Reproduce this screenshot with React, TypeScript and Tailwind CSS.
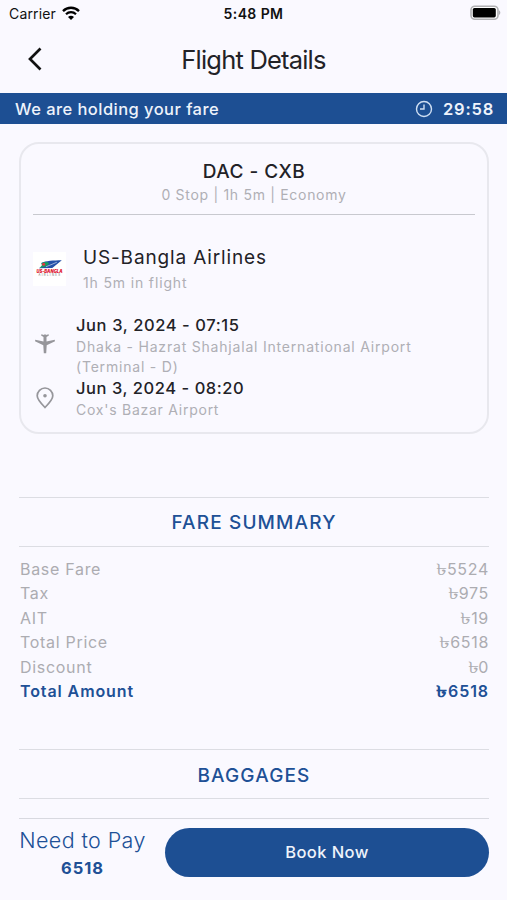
const fares = [
  { label: "Base Fare", amount: "5524" },
  { label: "Tax", amount: "975" },
  { label: "AIT", amount: "19" },
  { label: "Total Price", amount: "6518" },
  { label: "Discount", amount: "0" },
];

const StatusBar = () => (
  <div className="h-7 shrink-0 grid grid-cols-3 items-center pl-[9px] pr-[6px] text-[14px] text-[#111]">
    <div className="flex items-center gap-[6px] -mt-[2px]">
      <span className="tracking-[0.15px]">Carrier</span>
      <svg width="18" height="14" viewBox="0 0 18 14" fill="none" stroke="#000">
        <path d="M1 5.1C5.4 .6 12.6 .6 17 5.1" strokeWidth="2.3" />
        <path d="M4 8.3c2.8-2.8 7.2-2.8 10 0" strokeWidth="2.2" />
        <path d="M9 14 6 10.9c1.7-1.6 4.3-1.6 6 0Z" fill="#000" stroke="none" />
      </svg>
    </div>
    <span className="text-center -ml-[3px] -mt-[2px] font-semibold text-[14px] tracking-[0.4px]">5:48 PM</span>
    <svg className="justify-self-end -mt-[2px]" width="31" height="16" viewBox="0 0 31 16">
      <rect x="1" y="1.2" width="27" height="13" rx="3.8" fill="#fff" stroke="#b0b0b3" strokeWidth="1.6" />
      <rect x="2.8" y="3" width="23" height="9.4" rx="1.6" fill="#000" />
      <path d="M29 5.3c1.8.8 1.8 4 0 4.8Z" fill="#b0b0b3" />
    </svg>
  </div>
);

const AirlineLogo = () => (
  <div className="w-[33px] h-[34px] mt-[1px] bg-white flex flex-col items-center justify-center">
    <svg width="26" height="10" viewBox="0 0 27 11">
      <path d="M4 3.2C9 .8 17 .5 26.5.3L16 8.8 1 9.2l5-2.2Z" fill="#2450a8" />
      <path d="M4 3.2c4-1.6 7-1.2 8.5.3-1 3-6 4.5-10.5 5.2L4.5 6Z" fill="#159a62" />
      <circle cx="6.5" cy="4.7" r="1.7" fill="#e5343f" />
      <path d="M9 7.5 21 2.5" stroke="#fff" strokeWidth=".6" />
    </svg>
    <span className="text-[4.2px] leading-[4px] font-black italic text-[#e02032]">US-BANGLA</span>
    <span className="text-[2.8px] leading-[3px] tracking-[1.3px] pl-[1px] text-[#666]">AIRLINES</span>
  </div>
);

const SectionTitle = ({ title }: { title: string }) => (
  <div className="h-[50px] border-y border-[#dcdde3] flex items-center justify-center pt-[3px]">
    <h2 className="text-[19px] font-[550] tracking-[1.15px] text-[#205096]">{title}</h2>
  </div>
);

const Taka = ({ amount }: { amount: string }) => (
  <span>
    <span className="inline-block origin-right scale-x-140 -mr-px">৳</span>
    {amount}
  </span>
);

const App = () => {
  return (
    <div className="h-[900px] w-full overflow-hidden flex flex-col bg-[#faf9ff] font-['Inter','Noto_Sans',sans-serif] text-[#222227]">
      <StatusBar />

      <header className="h-[65px] shrink-0 grid grid-cols-[60px_1fr_60px] items-center">
        <svg className="ml-[27px] -mt-[3px]" width="16" height="26" viewBox="0 0 16 26" fill="none">
          <path d="M13.5 2.5 3 13l10.5 10.5" stroke="#111" strokeWidth="2.7" />
        </svg>
        <h1 className="text-center text-[25.5px] tracking-[-0.8px]">Flight Details</h1>
      </header>

      <div className="h-[31px] shrink-0 bg-[#1d4f93] text-[#eef3fb] flex items-center pl-[15px] pr-[13px] pt-px">
        <span className="text-[16.5px] font-medium tracking-[0.45px]">We are holding your fare</span>
        <svg className="ml-auto mr-[10px] -mt-px" width="18" height="18" viewBox="0 0 18 18" fill="none" stroke="#cfdff3" strokeWidth="1.4">
          <circle cx="9" cy="9" r="7.5" />
          <path d="M9 4.5V9H5" />
        </svg>
        <span className="text-[16.5px] font-semibold tracking-[0.8px]">29:58</span>
      </div>

      <main className="flex-1 pl-[19px] pt-[18px]">
        <section className="h-[292px] w-[470px] rounded-[20px] border-2 border-[#e8e8ee] px-3">
          <div className="h-[71px] border-b border-[#c8c9cf] flex flex-col items-center pt-[15px]">
            <h2 className="text-[19px] leading-[26px] font-medium tracking-[0.5px]">DAC - CXB</h2>
            <p className="text-[14px] leading-[20px] tracking-[0.7px] text-[#afafb5]">0 Stop | 1h 5m | Economy</p>
          </div>

          <div className="flex items-center mt-[28px]">
            <AirlineLogo />
            <div className="ml-[17px]">
              <h3 className="text-[19px] leading-[30px] tracking-[0.85px]">US-Bangla Airlines</h3>
              <p className="text-[14px] leading-[20px] tracking-[0.85px] text-[#afafb5]">1h 5m in flight</p>
            </div>
          </div>

          <div className="grid grid-cols-[43px_1fr] mt-[21px]">
            <svg className="mt-[19px] ml-[2px]" width="20" height="22" viewBox="0 0 20 22" fill="#96969b">
              <path d="M6.4 1.2 9 2l1-1 1 1 2.6-.8.3 1.2L11.5 4v4.6L19.7 6.7l.3 1.5-8.300 4-.5 8.1h-2.4l-.5-8.1L0 8.2l.3-1.500L8.500 8.600V4L6.1 2.400Z" />
            </svg>
            <div>
              <p className="text-[16.5px] leading-[23px] font-medium tracking-[0.6px]">Jun 3, 2024 - 07:15</p>
              <p className="text-[14px] leading-[19.5px] tracking-[0.8px] text-[#afafb5]">
                Dhaka - Hazrat Shahjalal International Airport
                <br />
                (Terminal - D)
              </p>
            </div>
            <svg className="mt-[11px] ml-[2px]" width="20" height="22" viewBox="0 0 20 22" fill="none" stroke="#96969b" strokeWidth="1.7">
              <path d="M10 20.5C6 16.5 2.2 12.5 2.2 8.8a7.8 7.8 0 0 1 15.6 0c0 3.7-3.8 7.7-7.8 11.7Z" />
              <circle cx="10" cy="8.8" r="1.8" fill="#96969b" stroke="none" />
            </svg>
            <div className="mt-px">
              <p className="text-[16.5px] leading-[23px] font-medium tracking-[0.55px]">Jun 3, 2024 - 08:20</p>
              <p className="text-[14px] leading-[20px] tracking-[0.75px] text-[#afafb5]">Cox's Bazar Airport</p>
            </div>
          </div>
        </section>

        <section className="w-[470px] mt-[63px]">
          <SectionTitle title="FARE SUMMARY" />
          <div className="pt-[10px] pl-px text-[16px] tracking-[0.7px] text-[#acacb1]">
            {fares.map((fare) => (
              <div key={fare.label} className="h-[24.4px] leading-[24px] flex justify-between">
                <span>{fare.label}</span>
                <Taka amount={fare.amount} />
              </div>
            ))}
            <div className="h-[24.4px] leading-[24px] flex justify-between font-semibold text-[#205096] tracking-[0.9px]">
              <span>Total Amount</span>
              <Taka amount="6518" />
            </div>
          </div>
        </section>

        <section className="w-[470px] mt-[46px]">
          <SectionTitle title="BAGGAGES" />
        </section>
      </main>

      <footer className="h-[82px] shrink-0 ml-[19px] w-[470px] border-t border-[#d8d9e0] flex pt-[9px]">
        <div className="w-[146px] shrink-0 text-[#205096]">
          <div className="w-[127px] text-center">
            <p className="text-[21.5px] leading-[28px] -mt-[2px] font-light tracking-[0.4px] whitespace-nowrap">Need to Pay</p>
            <p className="text-[16.5px] leading-[26px] mt-px font-bold tracking-[1px]">6518</p>
          </div>
        </div>
        <button className="flex-1 h-[49px] rounded-full bg-[#1d4f93] text-[#eef3fb] text-[16.5px] font-medium tracking-[0.4px]">Book Now</button>
      </footer>
    </div>
  );
};

export default App;
